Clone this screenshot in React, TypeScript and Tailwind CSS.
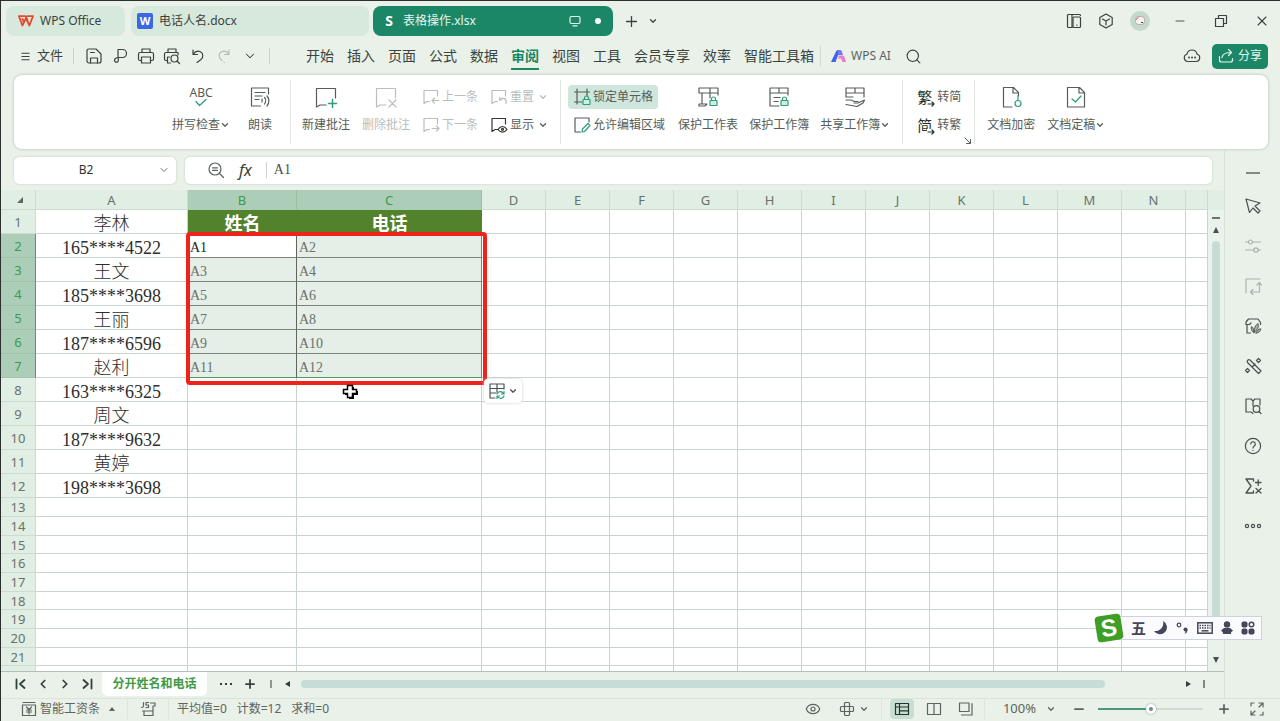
import { ReactNode } from 'react';
import clsx from 'clsx';
import { ChevronDown, ChevronLeft, ChevronRight, Eye, Menu, Minus, Plus, Search, X } from 'lucide-react';

type IconProps = { w?: number; h?: number; className?: string; sw?: number; children: ReactNode };

const Svg = ({ w = 18, h, className, sw = 1.2, children }: IconProps) => (
  <svg
    width={w}
    height={h ?? w}
    viewBox={`0 0 ${w} ${h ?? w}`}
    fill="none"
    stroke="currentColor"
    strokeWidth={sw}
    strokeLinecap="round"
    strokeLinejoin="round"
    className={clsx('shrink-0', className)}
    aria-hidden="true"
  >
    {children}
  </svg>
);

const GREEN = '#2f9c7c';

const Caret = ({ className }: { className?: string }) => (
  <ChevronDown size={10} strokeWidth={3} className={clsx('shrink-0', className)} />
);

/* ---------- title bar ---------- */

const WpsLogo = () => (
  <Svg w={16} h={12} sw={1.8} className="text-[#e2492f]">
    <path d="M1 1.2h6.500L9.500 5M1 1.200l3.400 9.300L8 3.200l3.400 7.300L15 1.200H9.500M4.500 4l1.500 3" />
  </Svg>
);

const TitleBar = () => (
  <header className="flex h-10 shrink-0 items-center pl-[5px] pr-1.5 text-xs text-[#3a443e]">
    <button className="flex h-[30px] w-[119px] items-center gap-1.5 rounded-lg bg-[#d7e8dc] pl-3">
      <WpsLogo />
      <span>WPS Office</span>
    </button>
    <button className="ml-1.5 flex h-[30px] w-[238px] items-center gap-1.5 rounded-lg bg-[#d7e8dc] pl-1.5">
      <span className="flex size-4 items-center justify-center rounded-xs bg-[#3c67e3] text-[11px] font-bold text-white">W</span>
      <span>电话人名.docx</span>
    </button>
    <button className="ml-1 flex h-[30px] w-60 items-center rounded-lg bg-[#1b8766] pl-2 pr-3 text-[#e6f5ee]">
      <span className="w-4 text-center text-sm font-bold text-white">S</span>
      <span className="ml-1.5">表格操作.xlsx</span>
      <Svg w={12} h={12} className="ml-auto">
        <rect x="1" y="1.5" width="10" height="7" rx="1.5" />
        <path d="M4 10.800h4" />
      </Svg>
      <span className="ml-3.5 size-1.5 rounded-full bg-white" />
    </button>
    <button aria-label="新建" className="ml-2.5"><Plus size={17} strokeWidth={1.8} /></button>
    <button aria-label="标签列表" className="ml-2"><Caret /></button>

    <div className="ml-auto flex items-center">
      <button aria-label="侧栏" className="flex w-8 justify-center">
        <Svg w={16}>
          <path d="M6 14.500H2.500a1 1 0 0 1-1-1v-11a1 1 0 0 1 1-1h11a1 1 0 0 1 1 1" />
          <rect x="7" y="4" width="7.500" height="10.500" rx="1" />
          <path d="M10.800 12.200h.2M6 1.500v13" />
        </Svg>
      </button>
      <button aria-label="应用" className="flex w-8 justify-center">
        <Svg w={16}>
          <path d="M8 1l6.200 3.500v7L8 15l-6.200-3.500v-7zM4.500 6L8 8l3.500-2M8 8v4" />
        </Svg>
      </button>
      <button aria-label="账户" className="ml-2 mr-1 flex size-5 items-center justify-center rounded-full bg-[#c5d9cb]">
        <Svg w={12} sw={1}>
          <rect x="1.500" y="1.500" width="9" height="8" rx="3" fill="#f6f2f0" stroke="#b9aaa6" />
          <path d="M4 2.500l-1.500 2" stroke="#d6596a" />
          <path d="M7.500 7.500h1" stroke="#333" />
        </Svg>
      </button>
      <button aria-label="最小化" className="flex w-10 justify-center pl-3"><Minus size={14} strokeWidth={1.5} /></button>
      <button aria-label="还原" className="flex w-10 justify-center pl-3.5">
        <Svg w={14}>
          <rect x="1.500" y="4.500" width="8" height="8" />
          <path d="M4.500 4.500v-3h8v8h-3" />
        </Svg>
      </button>
      <button aria-label="关闭" className="flex w-10 justify-center pl-4"><X size={16} strokeWidth={1.6} /></button>
    </div>
  </header>
);

/* ---------- menu row ---------- */

const menus = ['开始', '插入', '页面', '公式', '数据', '审阅', '视图', '工具', '会员专享', '效率', '智能工具箱'];

const quickTools: { label: string; icon: ReactNode; off?: boolean }[] = [
  {
    label: '保存',
    icon: (
      <Svg>
        <path d="M2 14V3.500a1.500 1.500 0 0 1 1.500-1.500H11l5 5v7a2 2 0 0 1-2 2H4a2 2 0 0 1-2-2z" />
        <path d="M5.500 16v-5h7v5M5.500 5.500h4" />
      </Svg>
    ),
  },
  {
    label: '输出为PDF',
    icon: (
      <Svg>
        <path d="M7 8V2.500h4.500a3.800 3.800 0 0 1 0 8H7.500c-3 0-4 1.500-4 3s2 2.300 3.300 1.200C8 13.500 7 10 7 8" />
      </Svg>
    ),
  },
  {
    label: '打印',
    icon: (
      <Svg>
        <path d="M5 5V2h8v3M4.500 13.500H3A1.500 1.500 0 0 1 1.500 12V7A1.500 1.500 0 0 1 3 5.500h12A1.500 1.500 0 0 1 16.500 7v5a1.500 1.500 0 0 1-1.500 1.500h-1.500" />
        <rect x="4.500" y="10" width="9" height="6" />
      </Svg>
    ),
  },
  {
    label: '打印预览',
    icon: (
      <Svg>
        <path d="M5 5V2h8v3M4.500 13.500H3A1.500 1.500 0 0 1 1.500 12V7A1.500 1.500 0 0 1 3 5.500h12V8M4.500 10v6h3M4.500 10h2" />
        <circle cx="11.500" cy="11.500" r="3.500" />
        <path d="M14 14l2.500 2.500" />
      </Svg>
    ),
  },
  { label: '撤销', icon: <Svg><path d="M4 3v4.500h4.500M4.200 7.200C6 4.500 9 3.500 11.500 4.800c3 1.700 3 5.700.5 7.700l-4 3" /></Svg> },
  { label: '恢复', off: true, icon: <Svg><path d="M14 3v4.500H9.500M13.800 7.200C12 4.500 9 3.500 6.500 4.800c-3 1.700-3 5.700-.5 7.700l1 .8M9 15.500h.5" /></Svg> },
  { label: '更多', icon: <ChevronDown size={14} strokeWidth={1.8} /> },
];

const MenuRow = () => (
  <nav className="flex h-[30px] shrink-0 items-center pl-[19px] pr-3 text-[#3a443e]">
    <button className="flex items-center gap-1.5 text-[13px]">
      <Menu size={11} strokeWidth={2.2} />
      文件
    </button>
    <span className="ml-2.5 mr-[7px] h-4 w-px bg-[#c9d3cb]" />
    {quickTools.map((t) => (
      <button key={t.label} aria-label={t.label} className={clsx('flex w-[26px] justify-center', t.off && 'text-[#b3bcb5]')}>
        {t.icon}
      </button>
    ))}
    <span className="ml-1.5 h-4 w-px bg-[#c9d3cb]" />
    <div className="ml-9 mt-0.5 flex items-center gap-[13px] text-sm leading-6">
      {menus.map((m) => (
        <button
          key={m}
          className={clsx('border-b-2', m === '审阅' ? 'border-[#1b8766] font-bold text-[#1b8766]' : 'border-transparent')}
        >
          {m}
        </button>
      ))}
    </div>
    <span className="ml-1.5 h-5 w-px bg-[#cfd9d1]" />
    <button className="ml-2.5 flex items-center gap-1 text-xs text-[#5b655e]">
      <svg width="16" height="13" viewBox="0 0 16 13" aria-hidden="true">
        <path d="M0 12L5 1.500Q5.500 0 7 0h2L4.500 12z" fill="#3f63f0" />
        <path d="M7 0h2q1.200 0 1.700 1.200L12 5H7z" fill="#6f7cf2" />
        <path d="M8 5.500h3.500q1.500 0 2 1.500L15 12h-3.500L10 8.500H7z" fill="#ee7bd0" />
      </svg>
      WPS AI
    </button>
    <button aria-label="搜索" className="ml-3.5"><Search size={17} strokeWidth={1.6} /></button>
    <button aria-label="云同步" className="ml-auto">
      <Svg>
        <path d="M5 14.500a3.700 3.700 0 0 1-1.200-7.200 5.300 5.300 0 0 1 10.400 0A3.700 3.700 0 0 1 13 14.500z" />
        <path d="M6 10.500h.1M9 10.500h.1M12 10.500h.1" strokeWidth="1.800" />
      </Svg>
    </button>
    <button className="ml-[11px] flex h-[25px] w-14 items-center justify-center gap-1 rounded-[5px] bg-[#1b8766] text-xs text-[#e6f5ee]">
      <Svg w={16}>
        <path d="M1.500 8.500V12a2 2 0 0 0 2 2h9a2 2 0 0 0 2-2v-1.500M4 9.500C4.500 6 7 4.500 13 4.500M10.500 1.500l3 3-3 3" />
      </Svg>
      分享
    </button>
  </nav>
);

/* ---------- ribbon ---------- */

const bubble = 'M12 20H6l-3.500 2V3.500h19V13';
const smallBubble = 'M7.500 13.500H5l-3 2v-13h13.500V8';

const Tall = ({ icon, label, caret, off }: { icon: ReactNode; label: string; caret?: boolean; off?: boolean }) => (
  <button className={clsx('flex flex-col items-center gap-2', off && 'text-[#b9bebb]')}>
    <span className="flex h-6 items-center justify-center">{icon}</span>
    <span className="flex items-center whitespace-nowrap leading-4">
      {label}
      {caret && <Caret />}
    </span>
  </button>
);

const Row = ({ icon, label, caret, off, on }: { icon: ReactNode; label: string; caret?: boolean; off?: boolean; on?: boolean }) => (
  <button
    className={clsx('flex h-6 items-center gap-0.5 whitespace-nowrap', off && 'text-[#b9bebb]', on && 'rounded-sm bg-[#cfe6dc]')}
  >
    {icon}
    {label}
    {caret && <Caret className="ml-0.5" />}
  </button>
);

const Divider = () => <span className="h-16 w-px shrink-0 bg-[#e2e6e3]" />;

const Lock = ({ x, y }: { x: number; y: number }) => (
  <g stroke={GREEN} transform={`translate(${x} ${y})`}>
    <rect x="0" y="3.500" width="7" height="5" rx=".5" fill="#cfeee2" />
    <path d="M1.500 3.500V2a2 2 0 0 1 4 0v1.500" />
  </g>
);

const Ribbon = () => (
  <section className="ml-[13px] mr-3 mt-1 flex h-[74px] shrink-0 overflow-hidden rounded-lg bg-white pl-[158px] pt-[5px] text-xs text-[#565d59] shadow-[0_0_3px_#a9b8ad]">
    <div className="flex items-start gap-[18px] pr-[18px] pt-[5px]">
      <Tall
        label="拼写检查"
        caret
        icon={
          <span className="flex flex-col items-center">
            <span className="text-xs leading-[11px]">ABC</span>
            <Svg w={14} h={10}><path d="M2 3.500l3.500 4L12 1.500" stroke={GREEN} /></Svg>
          </span>
        }
      />
      <Tall
        label="朗读"
        icon={
          <Svg w={22}>
            <path d="M19.500 8V2h-17v18h9M6 6.500h10M6 10h7M6 13.500h4" />
            <path d="M13 13v3M15.500 11.500c1.500 1.500 1.500 4.500 0 6.500M18 10c2.500 2.500 2.500 7 0 10" />
          </Svg>
        }
      />
    </div>
    <Divider />
    <div className="flex items-start gap-3 pl-[11px] pr-3 pt-[5px]">
      <Tall label="新建批注" icon={<Svg w={24}><path d={bubble} /><path d="M18.500 14.500v8M14.500 18.500h8" stroke={GREEN} strokeWidth="1.500" /></Svg>} />
      <Tall off label="删除批注" icon={<Svg w={24}><path d={bubble} /><path d="M15 15l7 7M22 15l-7 7" /></Svg>} />
      <div className="flex flex-col gap-1">
        <Row off label="上一条" icon={<Svg><path d={smallBubble} /><path d="M17 12.500h-7M12.500 10L10 12.500l2.500 2.500" /></Svg>} />
        <Row off label="下一条" icon={<Svg><path d={smallBubble} /><path d="M10 12.500h7M14.500 10l2.500 2.500-2.500 2.500" /></Svg>} />
      </div>
      <div className="flex flex-col gap-1">
        <Row off caret label="重置" icon={<Svg><path d={smallBubble} /><path d="M9.500 12c2-2.500 6.500-2 6.500 1v2.500M9.500 9.500V12H12" /></Svg>} />
        <Row
          caret
          label="显示"
          icon={
            <Svg className="text-[#2f3833]">
              <path d={smallBubble} />
              <path d="M8 13.500c2.500-4 6.500-4 9 0-2.500 3.500-6.500 3.500-9 0z" fill="#fff" />
              <circle cx="12.500" cy="13.300" r="1" />
            </Svg>
          }
        />
      </div>
    </div>
    <Divider />
    <div className="flex items-start pl-[7px] pr-3 pt-[5px]">
      <div className="flex flex-col items-start gap-1">
        <div className="rounded-sm bg-[#cfe6dc] px-[5px]">
          <Row on label="锁定单元格" icon={<Svg><path d="M4 1v15M1.500 4h15M14 1v7M1.500 14H9" /><Lock x={10} y={8} /></Svg>} />
        </div>
        <div className="px-[5px]">
          <Row
            label="允许编辑区域"
            icon={
              <Svg>
                <path d="M16 6V2H2v14h4" />
                <path d="M9 16l.5-3 5.500-5.500 2 2L11.500 15.500zM6 16h1.500" stroke={GREEN} />
              </Svg>
            }
          />
        </div>
      </div>
      <div className="flex gap-[11px] pl-2">
        <Tall label="保护工作表" icon={<Svg w={22}><path d="M21 9V2H2v5h19M5 7v11M13 2v10M2 18h8l-2 2H2z" /><Lock x={13} y={11} /></Svg>} />
        <Tall label="保护工作簿" icon={<Svg w={22}><path d="M20 9V2H2v18h9M2 7h18M11 2v5M6 11.500h6M6 15.500h4" /><Lock x={13} y={11} /></Svg>} />
        <Tall
          caret
          label="共享工作簿"
          icon={
            <Svg w={22}>
              <path d="M2 11V2h18v9M2 7h18M11 2v5M2 11h7" />
              <path d="M2 14h5l3.500 1.500h3.500M10 17h4l6.500-3-1.500 3-6 3.500-11-2" />
            </Svg>
          }
        />
      </div>
    </div>
    <Divider />
    <div className="flex flex-col gap-1 pl-[13px] pr-[13px] pt-[5px]">
      {[['繁', '转简'], ['简', '转繁']].map(([glyph, label]) => (
        <button key={label} className="flex h-6 items-center gap-1 whitespace-nowrap">
          <span className="relative w-[17px] text-[15px] leading-6 text-[#26332c]">
            {glyph}
            <Svg w={8} h={6} className="absolute -right-0.5 bottom-0.5 bg-white"><path d="M1 3h6M5 1l2 2-2 2" /></Svg>
          </span>
          {label}
        </button>
      ))}
    </div>
    <button aria-label="更多设置" className="-ml-2.5 mb-1 mr-0.5 self-end">
      <Svg w={8} sw={1}><path d="M1 1l5 5M6.500 2.500v4h-4" /></Svg>
    </button>
    <Divider />
    <div className="flex items-start gap-3 pl-3 pt-[5px]">
      <Tall
        label="文档加密"
        icon={
          <Svg w={22}>
            <path d="M12 21H3.500V1.500h10l5 5V10M13 1.500V7h5.500" />
            <circle cx="18" cy="17.500" r="3" stroke={GREEN} />
            <path d="M18 14.500v-5" stroke={GREEN} />
          </Svg>
        }
      />
      <Tall
        caret
        label="文档定稿"
        icon={
          <Svg w={22}>
            <path d="M2.500 1.500h12l5 5V21h-17zM14 1.500V7h5.500" />
            <path d="M7 13l3.500 3L16 10" stroke={GREEN} />
          </Svg>
        }
      />
    </div>
  </section>
);

/* ---------- formula bar ---------- */

const FormulaBar = () => (
  <div className="flex h-10 shrink-0 items-center gap-[9px] pl-[13px] pr-3">
    <div className="flex h-[27px] w-[162px] items-center rounded-[5px] bg-white pr-1.5 shadow-[0_0_2px_#b4c4b9]">
      <input aria-label="名称框" defaultValue="B2" className="w-full min-w-0 bg-transparent text-center text-xs text-[#2c332f] outline-none" />
      <ChevronDown size={12} strokeWidth={2} className="shrink-0 text-[#6d7670]" />
    </div>
    <div className="flex h-[27px] flex-1 items-center rounded-[5px] bg-white pl-[22px] shadow-[0_0_2px_#b4c4b9]">
      <Svg className="text-[#59625c]">
        <circle cx="8" cy="8" r="6" />
        <path d="M12.500 12.500l4 4M5.500 6.800h5M5.500 9.300h5" />
      </Svg>
      <span className="ml-3.5 text-base italic text-[#333b36]">fx</span>
      <span className="ml-3.5 h-4 w-px bg-[#cdd3cf]" />
      <input
        aria-label="编辑栏"
        defaultValue="A1"
        className="ml-[7px] flex-1 bg-transparent font-['Liberation_Serif','Noto_Sans_CJK_SC',serif] text-sm text-[#4a504c] outline-none"
      />
    </div>
  </div>
);

/* ---------- grid ---------- */

const columns = ['A', 'B', 'C', 'D', 'E', 'F', 'G', 'H', 'I', 'J', 'K', 'L', 'M', 'N', ''];

const colA = [
  '李林', '165****4522', '王文', '185****3698', '王丽', '187****6596',
  '赵利', '163****6325', '周文', '187****9632', '黄婷', '198****3698',
];

const rowNumbers = Array.from({ length: 22 }, (_, i) => i + 1);

const rowHeight = (n: number) => (n <= 12 ? 'h-6' : n % 3 === 0 ? 'h-[18px]' : 'h-[19px]');

const cellClass = (n: number, col: string) => {
  const picked = n >= 2 && n <= 7;
  if (n === 1 && (col === 'B' || col === 'C')) {
    return 'bg-[#52822c] pt-0.5 text-center text-lg font-bold leading-[22px] text-white';
  }
  if (picked && col === 'B') {
    return clsx(
      "border-b border-r border-r-[#5d6660] pl-0.5 pt-1 font-['Liberation_Serif','Noto_Sans_CJK_SC',serif] text-sm leading-[18px]",
      n === 7 ? 'border-b-[#4e9a64]' : 'border-b-[#7b857e]',
      n === 2 ? 'bg-white text-[#222]' : 'bg-[#e5eee7] text-[#6b716d]'
    );
  }
  if (picked && col === 'C') {
    return clsx(
      "border-b border-r border-r-[#4e9a64] bg-[#e5eee7] pl-0.5 pt-1 font-['Liberation_Serif','Noto_Sans_CJK_SC',serif] text-sm leading-[18px] text-[#6b716d]",
      n === 7 ? 'border-b-[#4e9a64]' : 'border-b-[#7b857e]'
    );
  }
  if (col === 'A') {
    return "border-b border-r border-[#c9d4cc] pt-1 text-center font-['Liberation_Serif','Noto_Sans_CJK_SC',serif] text-lg font-light leading-[18px] text-[#2e2e2e]";
  }
  return 'border-b border-r border-[#c9d4cc]';
};

const cellText = (n: number, col: string) => {
  if (col === 'A') return colA[n - 1] ?? '';
  if (n === 1) return col === 'B' ? '姓名' : col === 'C' ? '电话' : '';
  if (n <= 7 && col === 'B') return `A${n * 2 - 3}`;
  if (n <= 7 && col === 'C') return `A${n * 2 - 2}`;
  return '';
};

const Grid = () => (
  <div className="flex min-h-0 flex-1 border-b border-[#b3beb6]">
    <div className="relative min-w-0 flex-1 overflow-hidden bg-white">
      <table className="w-full table-fixed border-separate border-spacing-0">
        <colgroup>
          <col className="w-[35px]" />
          <col className="w-[152px]" />
          <col className="w-[109px]" />
          <col className="w-[185px]" />
          {columns.slice(3, 14).map((c) => <col key={c} className="w-16" />)}
          <col />
        </colgroup>
        <thead>
          <tr className="h-5 text-[13px] leading-[18px] text-[#68726b]">
            <th className="border-b border-r border-[#ccdacf] bg-[#e1eee3] p-0">
              <svg width="6" height="6" viewBox="0 0 7 7" className="ml-4" aria-hidden="true">
                <path d="M7 0v7H0z" fill="#5d665f" />
              </svg>
            </th>
            {columns.map((c) => (
              <th
                key={c}
                className={clsx(
                  'border-b border-r p-0 font-normal',
                  c === 'B' || c === 'C'
                    ? 'border-b-[#accdb8] border-r-[#9bbda6] bg-[#accdb8] text-[#3c9a51]'
                    : 'border-[#ccdacf] bg-[#e1eee3]'
                )}
              >
                {c}
              </th>
            ))}
          </tr>
        </thead>
        <tbody>
          {rowNumbers.map((n) => (
            <tr key={n} className={rowHeight(n)}>
              <th
                className={clsx(
                  'border-b border-r p-0 text-[13px] font-normal leading-4',
                  n >= 2 && n <= 7
                    ? 'border-b-[#9fc2aa] border-r-[#4e9a64] bg-[#accdb8] text-[#3c9a51]'
                    : 'border-[#ccdacf] bg-[#e1eee3] text-[#68726b]'
                )}
              >
                {n}
              </th>
              {columns.map((c) => (
                <td key={c} className={clsx('p-0', cellClass(n, c))}>{cellText(n, c)}</td>
              ))}
            </tr>
          ))}
        </tbody>
      </table>

      <div className="pointer-events-none absolute left-[185px] top-[42px] h-[153px] w-[301px] rounded-sm border-4 border-[#f0231a]" />
      <button
        aria-label="自动填充选项"
        className="absolute left-[483px] top-[189px] flex h-6 w-[38px] items-center justify-center gap-0.5 rounded-sm bg-white text-[#4b554f] shadow-[0_0_3px_#c5cec8]"
      >
        <Svg>
          <path d="M16 7V2H2v14h5M2 6.500h14M9 2v8M2 11h6" />
          <path d="M9 12c1-3 5-3 6.500-.5M16 9.500V12h-2.500M16 14c-1 3-5 3-6.500.5M9 16.500V14h2.500" stroke={GREEN} />
        </Svg>
        <Caret />
      </button>
      <svg width="18" height="16" viewBox="0 0 18 16" className="absolute left-[340px] top-[194px]" aria-hidden="true">
        <path d="M8 3h5v4h4v4h-4v4H8v-4H4V7h4z" fill="#000" />
        <path d="M6.500 1.500h5v4h4v4h-4v4h-5v-4h-4v-4h4z" fill="#fff" stroke="#000" strokeWidth="1.500" />
      </svg>
    </div>

    <div className="flex w-4 shrink-0 flex-col items-center bg-[#e9f2eb] text-[#48524c]">
      <span className="h-5 w-full shrink-0 bg-[#e1eee3]" />
      <span className="mt-[7px] h-0.5 w-2 bg-[#6b766f]" />
      <button aria-label="向上滚动" className="mt-2">
        <svg width="6" height="6" viewBox="0 0 6 6" aria-hidden="true"><path d="M3 0l3 6H0z" fill="currentColor" /></svg>
      </button>
      <span className="mt-2 w-2 flex-1 rounded-full bg-[#c8dcd7]" />
      <button aria-label="向下滚动" className="mb-2 mt-6">
        <svg width="6" height="6" viewBox="0 0 6 6" aria-hidden="true"><path d="M3 6L0 0h6z" fill="currentColor" /></svg>
      </button>
    </div>
  </div>
);

/* ---------- sheet tabs ---------- */

const SheetBar = () => (
  <div className="flex h-[26px] shrink-0 items-center pb-0.5 pl-[9px] text-[#33403a]">
    <button aria-label="第一个" className="flex w-[22px] justify-center">
      <Svg w={12} sw={1.8}><path d="M1.500 1.500v9M9.500 2L5 6l4.500 4" /></Svg>
    </button>
    <button aria-label="上一个" className="flex w-[22px] justify-center"><ChevronLeft size={14} strokeWidth={3} /></button>
    <button aria-label="下一个" className="flex w-[22px] justify-center"><ChevronRight size={14} strokeWidth={3} /></button>
    <button aria-label="最后一个" className="flex w-[22px] justify-center">
      <Svg w={12} sw={1.8}><path d="M10.500 1.500v9M2.500 2L7 6l-4.500 4" /></Svg>
    </button>
    <button className="ml-1 h-6 w-[105px] self-start whitespace-nowrap rounded-b-md bg-white text-xs font-bold text-[#3f9a45]">分开姓名和电话</button>
    <button aria-label="更多工作表" className="ml-[13px] flex gap-[3px]">
      <span className="size-0.5 bg-current" />
      <span className="size-0.5 bg-current" />
      <span className="size-0.5 bg-current" />
    </button>
    <button aria-label="新建工作表" className="ml-[11px]"><Plus size={14} strokeWidth={3} /></button>
    <span className="ml-[13px] h-2 w-0.5 bg-[#8b968f]" />
    <button aria-label="向左滚动" className="ml-[13px]">
      <svg width="6" height="6" viewBox="0 0 6 6" aria-hidden="true"><path d="M0 3l5-3v6z" fill="currentColor" /></svg>
    </button>
    <span className="ml-2.5 h-2 flex-1 rounded-full bg-[#c8dcd7]" />
    <button aria-label="向右滚动" className="ml-20">
      <svg width="6" height="6" viewBox="0 0 6 6" aria-hidden="true"><path d="M6 3L1 0v6z" fill="currentColor" /></svg>
    </button>
    <span className="ml-3 mr-[19px] h-2 w-0.5 bg-[#7d8d84]" />
  </div>
);

/* ---------- right side bar ---------- */

const sideTools: { label: string; icon: ReactNode; off?: boolean }[] = [
  { label: '选择', icon: <Svg><path d="M2 2l3.500 13.500L9 11l5 5 2-2-5-5 5-3z" /></Svg> },
  {
    label: '属性',
    off: true,
    icon: <Svg><path d="M1.500 5h3M8.500 5h8M1.500 13h8M14 13h2.500" /><circle cx="6.500" cy="5" r="2" /><circle cx="12" cy="13" r="2.200" /></Svg>,
  },
  { label: '布局', off: true, icon: <Svg><path d="M2 16V2h14M15.500 6v9H7M13 8l2.500-2.500L17.500 8M9 12.500L6.500 15 9 17.500" /></Svg> },
  {
    label: '美化',
    icon: (
      <Svg>
        <path d="M16.500 7.500V5.500L14 2H4.500L2 5v2.500h1V16h3.500M3 7.500h2.500L7 6" />
        <path d="M9.500 15.500c-2.300-1.500-2.500-4-2-6 2 1.200 2.800 3.500 2 6zM10.500 15c-.8-3.500.8-6.800 3.500-8.500 1 3.300-.3 6.800-3.500 8.500zM12 16c1-2.800 2.500-4 4.800-4.200-.3 2.700-2 4.200-4.800 4.200z" fill="currentColor" fillOpacity=".4" strokeWidth=".9" />
      </Svg>
    ),
  },
  {
    label: '工具',
    icon: (
      <Svg>
        <path d="M6 3l11 11-2.500 2.500-11-11a1.800 1.800 0 0 1 2.500-2.500zM8.500 9.500l2.500-2.500" />
        <path d="M14.500 1.500l2 2-2 2-2-2zM3.500 11.500l2 2-2 2-2-2z" />
      </Svg>
    ),
  },
  {
    label: '查找',
    icon: <Svg><path d="M16 8V2H11L9 4 7 2H2v13h5l2 1.500M9 4v5" /><circle cx="12.500" cy="12" r="3.300" /><path d="M15 14.500l2 2" /></Svg>,
  },
  { label: '帮助', icon: <Svg><circle cx="9" cy="9" r="7.600" /><path d="M6.700 7a2.300 2.300 0 1 1 3.600 2c-.9.600-1.300 1-1.300 2M9 13.300v.1" /></Svg> },
  { label: '计算', icon: <Svg sw={1.3}><path d="M9.500 4V2H2l5 7-5 7h7.500v-2M11.500 5.500h5.500M14.200 2.800v5.500M12 11.500l5 4.500M17 11.500l-5 4.500" /></Svg> },
  { label: '更多', icon: <Svg><circle cx="3" cy="9" r="1.600" /><circle cx="9" cy="9" r="1.600" /><circle cx="15" cy="9" r="1.600" /></Svg> },
];

const SideBar = () => (
  <aside className="flex w-14 shrink-0 flex-col items-center border-l border-[#d6e2d8] text-[#48524c]">
    <button aria-label="收起" className="flex h-9 items-end pb-3"><span className="h-0.5 w-3.5 bg-[#818b84]" /></button>
    {sideTools.map((t) => (
      <button key={t.label} aria-label={t.label} className={clsx('flex h-10 w-10 items-center justify-center', t.off && 'text-[#a9b3ac]')}>
        {t.icon}
      </button>
    ))}
  </aside>
);

/* ---------- status bar ---------- */

const StatusBar = () => (
  <footer className="flex h-[23px] shrink-0 items-center whitespace-nowrap border-t border-[#d9e4db] pb-0.5 pl-5 pr-[15px] text-xs text-[#5b655e]">
    <button className="flex items-center gap-[3px]">
      <Svg w={16}>
        <path d="M2 1.500h12M1.500 4h13v10.500h-13z" />
        <path d="M5.500 6L8 8.500 10.500 6M8 8.500V13M5.500 9h5M5.500 11h5" />
      </Svg>
      智能工资条
      <svg width="6" height="4" viewBox="0 0 6 4" className="ml-1.5" aria-hidden="true"><path d="M3 0l3 4H0z" fill="currentColor" /></svg>
    </button>
    <span className="ml-3 h-full w-px bg-[#dce6de]" />
    <button aria-label="JS 宏" className="ml-3">
      <Svg w={16}>
        <path d="M3.500 1.500V5Q3.500 6.500 1.500 6.500M8.500 1.500H6V4h2.500v2.500H6M10.500 2H15v3h-2v9.500H4V10H2.500M4 10h9" />
      </Svg>
    </button>
    <span className="ml-3 h-full w-px bg-[#dce6de]" />
    <span className="ml-2">平均值=0</span>
    <span className="ml-2.5">计数=12</span>
    <span className="ml-2.5">求和=0</span>

    <div className="ml-auto flex h-full items-center">
      <button aria-label="护眼模式"><Eye size={16} strokeWidth={1.8} /></button>
      <button aria-label="阅读模式" className="ml-[18px] flex items-center gap-0.5">
        <Svg w={16}>
          <rect x="5.500" y="1.500" width="5" height="13" rx="1" />
          <rect x="1.500" y="5.500" width="13" height="5" rx="1" />
        </Svg>
        <Caret className="ml-0.5" />
      </button>
      <span className="mx-3 h-full w-px bg-[#dce6de]" />
      <button aria-label="普通视图" className="-ml-1 flex h-full w-6 items-center justify-center rounded-sm bg-[#c7dfd2] text-[#26332c]">
        <Svg w={16}><path d="M1.500 2.500h13v11h-13zM1.500 6h13M5.500 2.500v11M5.500 9.800h9" /></Svg>
      </button>
      <button aria-label="分页预览" className="ml-3"><Svg w={16}><path d="M1.500 2.500h13v11h-13zM8 2.500v11" /></Svg></button>
      <button aria-label="页面布局" className="ml-4"><Svg w={16}><path d="M1.500 2h9.500v8.500H1.500zM14 2.500V14H3.500" /></Svg></button>
      <span className="ml-2.5 h-full w-px bg-[#dce6de]" />
      <button className="ml-[18px] flex items-center gap-2.5 text-[13px]">
        100%
        <Caret />
      </button>
      <button aria-label="缩小" className="ml-4"><Minus size={14} strokeWidth={3} /></button>
      <input
        type="range"
        aria-label="缩放"
        defaultValue={50}
        className="ml-3 h-0.5 w-[105px] appearance-none bg-linear-to-r from-[#4b987f] from-50% to-[#cfdcd3] to-50% [&::-webkit-slider-thumb]:size-2.5 [&::-webkit-slider-thumb]:appearance-none [&::-webkit-slider-thumb]:rounded-full [&::-webkit-slider-thumb]:border-3 [&::-webkit-slider-thumb]:border-white [&::-webkit-slider-thumb]:bg-[#6b8f80] [&::-webkit-slider-thumb]:shadow-[0_0_2px_#7d9488]"
      />
      <button aria-label="放大" className="ml-3.5"><Plus size={14} strokeWidth={3} /></button>
      <button aria-label="全屏" className="ml-[18px]">
        <Svg w={16}><path d="M10 2h4v4M14 2l-4 4M6 14H2v-4M2 14l4-4M2 5V2h3M14 11v3h-3" /></Svg>
      </button>
    </div>
  </footer>
);

/* ---------- input method bar ---------- */

const ImeBar = () => (
  <div className="absolute bottom-[81px] right-[18px] flex h-6 items-center gap-2 border border-[#ccd2e2] bg-[#fbfbfe] pl-[31px] pr-1.5 text-[#454658]">
    <span className="absolute -left-1 -top-0.5 flex size-[26px] -rotate-9 items-center justify-center rounded-sm bg-[#3f9e24] font-['Liberation_Sans',sans-serif] text-2xl font-bold leading-[26px] text-white">
      S
    </span>
    <button className="text-[15px] font-bold leading-5">五</button>
    <button aria-label="半角">
      <svg width="14" height="14" viewBox="0 0 14 14" aria-hidden="true"><path d="M9 0a8 8 0 0 1-9 10 7 7 0 1 0 9-10z" fill="currentColor" /></svg>
    </button>
    <button aria-label="中文标点">
      <svg width="13" height="14" viewBox="0 0 13 14" aria-hidden="true">
        <circle cx="3" cy="4" r="1.800" fill="none" stroke="currentColor" strokeWidth="1.200" />
        <circle cx="9.500" cy="8.500" r="2" fill="currentColor" />
        <path d="M11.500 8.500q0 3.500-3 4.500 1.500-2 1-4z" fill="currentColor" />
      </svg>
    </button>
    <button aria-label="软键盘">
      <svg width="16" height="12" viewBox="0 0 16 12" fill="none" stroke="currentColor" aria-hidden="true">
        <rect x=".8" y=".8" width="14.400" height="10.400" strokeWidth="1.500" />
        <path d="M2.500 3.500h11M2.500 6h11" strokeWidth="1.600" strokeDasharray="1.500 1" />
        <path d="M4.500 8.800h7" strokeWidth="1.500" />
      </svg>
    </button>
    <button aria-label="账号">
      <svg width="12" height="14" viewBox="0 0 12 14" fill="currentColor" aria-hidden="true">
        <circle cx="6" cy="3.500" r="3.200" />
        <path d="M3 7h6l3 2.500-2 2V13H2v-1.500l-2-2z" />
      </svg>
    </button>
    <button aria-label="工具箱">
      <svg width="14" height="14" viewBox="0 0 14 14" fill="currentColor" aria-hidden="true">
        <rect x=".5" y=".5" width="6" height="6" rx="2" />
        <circle cx="10.500" cy="3.500" r="2.300" fill="none" stroke="currentColor" strokeWidth="1.500" />
        <rect x=".5" y="7.500" width="6" height="6" rx="2" />
        <rect x="7.500" y="7.500" width="6" height="6" rx="2" />
      </svg>
    </button>
  </div>
);

const App = () => (
  <div className="relative flex h-screen flex-col overflow-hidden border-l border-t border-[#2b2f2d] bg-[#e9f1e9] font-['Noto_Sans','Noto_Sans_CJK_SC',sans-serif]">
    <TitleBar />
    <MenuRow />
    <Ribbon />
    <div className="mt-px flex min-h-0 flex-1">
      <main className="flex min-w-0 flex-1 flex-col">
        <FormulaBar />
        <Grid />
        <SheetBar />
      </main>
      <SideBar />
    </div>
    <StatusBar />
    <ImeBar />
  </div>
);

export default App;
